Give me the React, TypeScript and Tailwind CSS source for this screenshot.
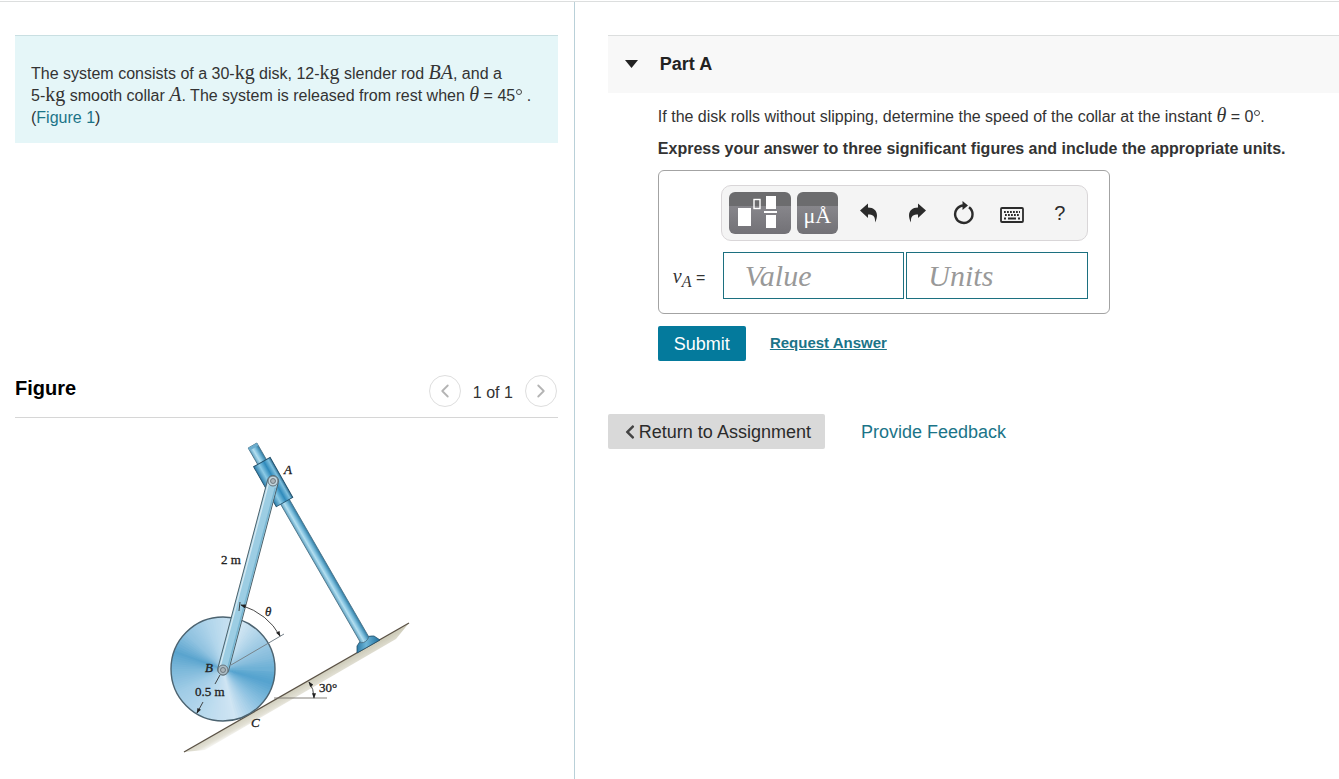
import { FaChevronLeft } from 'react-icons/fa'
import { ChevronLeft, ChevronRight } from 'lucide-react'

const SERIF = "font-['Liberation_Serif',serif]"

// Shading of the disk: [angle clockwise from the right, r, g, b]
const DISK_STOPS = [
    [0, 104, 174, 212],
    [14, 84, 162, 206],
    [45, 143, 195, 226],
    [75, 208, 229, 243],
    [110, 186, 218, 238],
    [150, 160, 204, 230],
    [178, 124, 184, 218],
    [198, 90, 164, 206],
    [222, 143, 194, 224],
    [250, 176, 213, 235],
    [290, 211, 231, 244],
    [320, 165, 206, 230],
    [345, 133, 188, 220],
    [360, 104, 174, 212]
]

const CENTER = { x: 223, y: 669, r: 52 }

function diskColor(angle: number) {
    const i = Math.max(1, DISK_STOPS.findIndex((s) => s[0] >= angle))
    const a = DISK_STOPS[i - 1]
    const b = DISK_STOPS[i]
    const t = (angle - a[0]) / (b[0] - a[0])
    const [r, g, bl] = [1, 2, 3].map((k) => Math.round(a[k] + (b[k] - a[k]) * t))
    return `rgb(${r},${g},${bl})`
}

function diskWedge(angle: number) {
    const point = (deg: number) => {
        const rad = (deg * Math.PI) / 180
        return `${(CENTER.x + CENTER.r * Math.cos(rad)).toFixed(2)} ${(CENTER.y + CENTER.r * Math.sin(rad)).toFixed(2)}`
    }
    return `M${CENTER.x} ${CENTER.y} L${point(angle)} A${CENTER.r} ${CENTER.r} 0 0 1 ${point(angle + 6)} Z`
}

function Mechanism() {
    const wedges = Array.from({ length: 120 }, (_, i) => i * 3)

    return (
        <svg
            width="260"
            height="320"
            viewBox="156 436 260 320"
            role="img"
            aria-label="Disk, slender rod and collar on an incline"
            className="mx-auto block"
        >
            <defs>
                <linearGradient id="tube" x1="0" x2="1" y1="0" y2="0">
                    <stop offset="0" stopColor="#5b9fc0" />
                    <stop offset="0.35" stopColor="#b4dff0" />
                    <stop offset="0.6" stopColor="#7fc0de" />
                    <stop offset="1" stopColor="#2b7aa3" />
                </linearGradient>
                <linearGradient id="collar" x1="0" x2="1" y1="0" y2="0">
                    <stop offset="0" stopColor="#2a7aa8" />
                    <stop offset="0.3" stopColor="#8ccbe6" />
                    <stop offset="0.6" stopColor="#2f8abb" />
                    <stop offset="0.85" stopColor="#7fc0de" />
                    <stop offset="1" stopColor="#2a6f96" />
                </linearGradient>
                <linearGradient id="foot" x1="0" x2="1" y1="0" y2="0">
                    <stop offset="0" stopColor="#2d7ca8" />
                    <stop offset="0.4" stopColor="#6db5d7" />
                    <stop offset="1" stopColor="#1e6f9d" />
                </linearGradient>
                <linearGradient id="ground" gradientUnits="userSpaceOnUse" x1="297" y1="687" x2="303" y2="698">
                    <stop offset="0" stopColor="#cfcdbb" />
                    <stop offset="0.6" stopColor="#e3e1d6" />
                    <stop offset="1" stopColor="#ffffff" />
                </linearGradient>
                <marker id="tip" viewBox="0 0 8 6" refX="7" refY="3" markerWidth="6" markerHeight="4" markerUnits="userSpaceOnUse" orient="auto-start-reverse">
                    <path d="M0 0 L8 3 L0 6 Z" fill="#222" />
                </marker>
            </defs>

            {/* incline */}
            <path d="M184 752 L409 623 L396 639 L205 750 Z" fill="url(#ground)" />
            <path d="M184 752 L409 623" stroke="#5a5145" strokeWidth="1.3" />

            {/* disk */}
            {wedges.map((a) => (
                <path key={a} d={diskWedge(a)} fill={diskColor(a)} />
            ))}
            <circle cx={CENTER.x} cy={CENTER.y} r={CENTER.r} fill="none" stroke="#4c6370" strokeWidth="1.4" />

            {/* guide rod, its foot and the collar */}
            <path d="M357 653 V646 L361 640 Q367 635 374 636 L380 640 Z" fill="url(#foot)" stroke="#234f68" strokeWidth="0.8" />
            <g transform="translate(252.5 445.5) rotate(-30)">
                <path d="M-5 0 H5 V224 Q0 228 -5 225 Z" fill="url(#tube)" stroke="#4a7084" strokeWidth="0.8" />
                <rect x="-5" y="0" width="10" height="3" fill="#6baccc" />
            </g>
            <g transform="translate(252.5 445.5) rotate(-29.5)">
                <rect x="-9.5" y="19" width="19" height="46" fill="url(#collar)" stroke="#214e68" strokeWidth="0.9" />
            </g>

            {/* angle theta */}
            <path d="M231 665 L284 634" stroke="#77838b" fill="none" />

            {/* slender rod */}
            <g transform="translate(273 481) rotate(14.8)">
                <rect x="-5.5" y="-5.5" width="11" height="206" rx="5.5" fill="#9ccde3" stroke="#4b5f69" strokeWidth="0.9" />
                <path d="M-3.8 3 V194" stroke="#d3e8f1" strokeWidth="1.4" />
                <path d="M4 6 V192" stroke="#77b5d1" strokeWidth="1.4" />
            </g>
            <circle cx="273" cy="481" r="5" fill="#c3d5dd" stroke="#65747c" />
            <circle cx="273" cy="481" r="2.5" fill="#a9b3b8" stroke="#5f6a70" strokeWidth="0.8" />
            <circle cx="223" cy="670" r="5" fill="#adbdc5" stroke="#65747c" />
            <circle cx="223" cy="670" r="2.5" fill="#a9b3b8" stroke="#5f6a70" strokeWidth="0.8" />

            <g fill="none" stroke="#333" strokeWidth="0.9">
                <path d="M241 605 Q268 614 280 636" markerStart="url(#tip)" markerEnd="url(#tip)" />
                <path d="M240 602 L239 611" />
                <path d="M220 675 L215 684" />
                <path d="M203 702 L197 713" markerEnd="url(#tip)" />
                <path d="M274 698 H327" stroke="#77736c" />
                <path d="M309 682 Q314 689 314 698" markerStart="url(#tip)" markerEnd="url(#tip)" />
            </g>

            <g className="font-['Liberation_Serif',serif] text-[13px]" fill="#222" stroke="#222" strokeWidth="0.3">
                <text x="284" y="474" fontStyle="italic">A</text>
                <text x="221" y="564">2 m</text>
                <text x="265" y="616" fontStyle="italic">θ</text>
                <text x="205" y="672" fontStyle="italic">B</text>
                <text x="195" y="696">0.5 m</text>
                <text x="251" y="727" fontStyle="italic">C</text>
                <text x="319" y="692">30°</text>
            </g>
        </svg>
    )
}

function MathText({ children, italic = false }: { children: string; italic?: boolean }) {
    return <span className={`${SERIF} text-xl leading-0 ${italic ? 'italic' : ''}`}>{children}</span>
}

function Degree() {
    return <span className="ml-px inline-block size-[6px] rounded-full border border-[#444] align-super" aria-label="degrees" />
}

function ProblemPanel() {
    return (
        <aside className="pt-[33px] pr-4 pl-[15px]">
            <section className="border-t border-[#c9dfe2] bg-[#e5f6f8] px-4 pt-[27px] pb-[14px] text-base leading-[22px]">
                <p>
                    The system consists of a 30-<MathText>kg</MathText> disk, 12-<MathText>kg</MathText> slender rod{' '}
                    <MathText italic>BA</MathText>, and a<br />
                    5-<MathText>kg</MathText> smooth collar <MathText italic>A</MathText>. The system is released from rest when{' '}
                    <MathText italic>θ</MathText> = 45<Degree /> .<br />
                    (<a href="#figure" className="text-[#1b7488]">Figure 1</a>)
                </p>
            </section>

            <section id="figure" className="mt-[232px]">
                <header className="flex items-center justify-between border-b border-[#d6d6d6] pb-[10px]">
                    <h2 className="pb-[6px] text-xl leading-6 font-bold text-black">Figure</h2>
                    <div className="flex items-center gap-3 pr-px">
                        <button aria-label="Previous figure" className="flex size-8 items-center justify-center rounded-full border border-[#dedede] text-[#b4b4b4]">
                            <ChevronLeft size={22} />
                        </button>
                        <span className="pt-1">1 of 1</span>
                        <button aria-label="Next figure" className="flex size-8 items-center justify-center rounded-full border border-[#dedede] text-[#b4b4b4]">
                            <ChevronRight size={22} />
                        </button>
                    </div>
                </header>
                <div className="pt-[18px]">
                    <Mechanism />
                </div>
            </section>
        </aside>
    )
}

function Toolbar() {
    const dark = 'h-[42px] rounded-md bg-linear-to-b from-[#6c6c6e] from-33% via-[#87868b] via-34% to-[#727176] text-white'
    const tool = 'flex w-6 justify-center'

    return (
        <div className="flex items-center rounded-[10px] border border-[#d9d6d8] bg-[#f4f4f4] px-[7px] py-[6px] text-[#2b2b2b]">
            <button aria-label="Templates" className={`w-[62px] ${dark}`}>
                <svg width="62" height="42" viewBox="0 0 62 42" fill="white">
                    <rect x="9" y="16" width="13" height="18" />
                    <rect x="25" y="7.5" width="6" height="9" fill="none" stroke="white" strokeWidth="1.4" />
                    <rect x="37" y="4" width="10" height="13" />
                    <rect x="35" y="19" width="13" height="2" />
                    <rect x="37" y="23" width="10" height="13" />
                </svg>
            </button>
            <button aria-label="Symbols" className={`ml-[6px] w-[41px] pt-1 text-[22px] ${SERIF} ${dark}`}>
                μÅ
            </button>
            <div className="flex flex-1 items-center justify-between pr-2 pl-[19px]">
                <button aria-label="Undo" className={tool}>
                    <svg width="20" height="20" viewBox="0 0 20 20" fill="currentColor">
                        <path d="M1 7.5 L9 0.5 V4.5 C17 4.5 20.5 11 16 19.5 C16.5 13 14 11.5 9 11.5 V15 Z" />
                    </svg>
                </button>
                <button aria-label="Redo" className={tool}>
                    <svg width="20" height="20" viewBox="0 0 20 20" fill="currentColor">
                        <path d="M19 7.5 L11 0.5 V4.5 C3 4.5 -0.5 11 4 19.5 C3.5 13 6 11.5 11 11.5 V15 Z" />
                    </svg>
                </button>
                <button aria-label="Reset" className={tool}>
                    <svg width="22" height="24" viewBox="0 0 22 24">
                        <path d="M16 6.2 A8.7 8.7 0 1 1 10.5 4.5" fill="none" stroke="currentColor" strokeWidth="2.4" />
                        <path d="M9.5 0 L15 4.5 L9.5 9 Z" fill="currentColor" />
                    </svg>
                </button>
                <button aria-label="Keyboard shortcuts" className={tool}>
                    <svg width="24" height="20" viewBox="0 0 24 20">
                        <rect x="1" y="5" width="22" height="14" rx="1" fill="none" stroke="currentColor" strokeWidth="1.8" />
                        <path d="M4 9 H20 M5 12 H20" stroke="currentColor" strokeWidth="1.8" strokeDasharray="1.8 1.2" />
                        <path d="M4 15.5 H6 M8 15.5 H16 M18 15.5 H20" stroke="currentColor" strokeWidth="1.8" />
                    </svg>
                </button>
                <button aria-label="Help" className={`text-xl ${tool}`}>
                    ?
                </button>
            </div>
        </div>
    )
}

function AnswerForm() {
    const field = `h-[47px] w-full min-w-0 border border-[#1c7080] bg-white pl-[21px] text-[30px] italic outline-none placeholder:text-[#999] ${SERIF}`

    return (
        <form onSubmit={(e) => e.preventDefault()}>
            <div className="mt-[10px] max-w-[452px] rounded-md border border-[#a3a3a3] pt-[14px] pr-[21px] pb-[14px] pl-[14px]">
                <div className="pl-[48px]">
                    <Toolbar />
                </div>
                <div className="mt-[11px] flex items-center">
                    <label htmlFor="value" className="w-[50px] shrink-0 text-base">
                        <span className={`text-xl italic ${SERIF}`}>
                            v<sub className="text-base">A</sub>
                        </span>{' '}
                        =
                    </label>
                    <div className="grid flex-1 grid-cols-2 gap-[2px]">
                        <input id="value" placeholder="Value" className={field} />
                        <input aria-label="Units" placeholder="Units" className={field} />
                    </div>
                </div>
            </div>
            <div className="mt-3 flex items-center gap-6">
                <button type="submit" className="h-[35px] rounded-xs bg-[#047a9c] px-4 text-lg leading-none text-white">
                    Submit
                </button>
                <a href="#answer" className="text-[15px] font-bold text-[#1b7488] underline">
                    Request Answer
                </a>
            </div>
        </form>
    )
}

export default function App() {
    return (
        <div className="min-h-screen bg-white pt-px font-['Liberation_Sans',Arial,sans-serif] text-[#333]">
            <div className="grid min-h-[778px] grid-cols-[3fr_4fr] border-t border-[#dcdede]">
                <ProblemPanel />

                <main className="border-l border-[#b9d0d8] pt-[33px] pl-[33px]">
                    <h2 className="flex h-[58px] items-center border-t border-[#dcdede] bg-[#f8f8f8] pb-[2px] text-lg font-bold text-[#222]">
                        <button aria-label="Collapse Part A" className="mr-[22px] ml-[17px]">
                            <svg width="13" height="8" viewBox="0 0 13 8" fill="currentColor">
                                <path d="M0 0 H13 L6.5 8 Z" />
                            </svg>
                        </button>
                        Part A
                    </h2>
                    <div className="pt-[13px] pr-4 pl-[50px]">
                        <p className="leading-[22px]">
                            If the disk rolls without slipping, determine the speed of the collar at the instant{' '}
                            <MathText italic>θ</MathText> = 0<Degree />.
                        </p>
                        <p className="mt-[10px] leading-[22px] font-bold">
                            Express your answer to three significant figures and include the appropriate units.
                        </p>
                        <AnswerForm />
                    </div>

                    <nav className="mt-[53px] flex items-center gap-9 text-lg">
                        <button className="flex h-[35px] items-center gap-px rounded-xs bg-[#d9d9d9] px-[14px] text-[#2b2b2b]">
                            <FaChevronLeft size={16} className="text-[#444]" />
                            Return to Assignment
                        </button>
                        <a href="#feedback" className="text-[#1b7488]">
                            Provide Feedback
                        </a>
                    </nav>
                </main>
            </div>
        </div>
    )
}
